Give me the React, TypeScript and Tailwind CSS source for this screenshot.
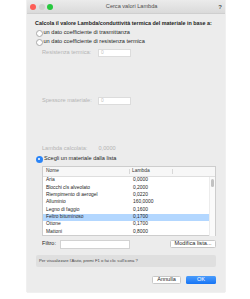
const rows = [
  { name: 'Aria', value: '0,0000' },
  { name: 'Blocchi cls alveolato', value: '0,2000' },
  { name: 'Riempimento di aerogel', value: '0,0220' },
  { name: 'Alluminio', value: '160,0000' },
  { name: 'Legno di faggio', value: '0,1600' },
  { name: 'Feltro bituminoso', value: '0,1700', selected: true },
  { name: 'Ottone', value: '0,1700' },
  { name: 'Mattoni', value: '0,8000' },
]

function Radio({ checked }: { checked?: boolean }) {
  if (checked) {
    return (
      <span className="flex size-[7px] shrink-0 items-center justify-center rounded-full bg-[#2a84f7]">
        <span className="size-[2.5px] rounded-full bg-white" />
      </span>
    )
  }
  return <span className="size-[7px] shrink-0 rounded-full border-[0.5px] border-[#a8a8a8] bg-white" />
}

function Field({ label, value }: { label: string; value: string }) {
  return (
    <div className="flex h-[9px] items-center pl-[7px] text-[#b4b4b4]">
      <span className="w-[56px]">{label}</span>
      <span className="flex h-[8px] w-[33px] items-center border-[0.5px] border-[#dcdcdc] bg-white pl-[2px] text-[4.9px] text-[#c4c4c4]">
        {value}
      </span>
    </div>
  )
}

export default function App() {
  return (
    <div className="h-[299px] w-[250px] bg-white font-['Liberation_Sans',Arial,sans-serif] text-[5.6px] leading-none text-[#262626]">
      <div className="ml-[27px] flex h-[292px] w-[198px] flex-col bg-[#ececec] shadow-[0_0_1px_rgba(0,0,0,0.35)]">
        <div className="flex h-[14px] items-center border-b-[0.5px] border-[#cfcfcf] bg-gradient-to-b from-[#ebebeb] to-[#dadada] px-[3px]">
          <div className="flex items-center gap-[2.5px]">
            <span className="size-[6px] rounded-full bg-[#fd5d56]" />
            <span className="size-[6px] rounded-full bg-[#d0d0d0]" />
            <span className="size-[6px] rounded-full bg-[#27c83f]" />
          </div>
          <div className="flex-1 pr-[8px] text-center text-[5.6px] text-[#4d4d4d]">Cerca valori Lambda</div>
          <span className="text-[6px] font-bold text-[#555]">?</span>
        </div>

        <div className="flex flex-col pl-[8px] pr-[9px]">
          <div className="mt-[5.5px] flex h-[9px] items-center whitespace-nowrap text-[5.4px] font-bold text-[#222]">
            Calcola il valore Lambda/conduttività termica del materiale in base a:
          </div>
          <div className="flex h-[9px] items-center gap-[1px] pl-[0.5px]">
            <Radio />
            <span>un dato coefficiente di trasmittanza</span>
          </div>
          <div className="flex h-[9px] items-center gap-[1px] pl-[0.5px]">
            <Radio />
            <span>un dato coefficiente di resistenza termica</span>
          </div>
          <div className="mt-[2px]">
            <Field label="Resistenza termica:" value="0" />
          </div>
          <div className="mt-[39px]">
            <Field label="Spessore materiale:" value="0" />
          </div>
          <div className="mt-[39px] flex h-[9px] items-center pl-[7px] text-[#b4b4b4]">
            <span className="w-[56px]">Lambda calcolata:</span>
            <span className="pl-[0.5px]">0,0000</span>
          </div>
          <div className="mt-[1px] flex h-[9px] items-center gap-[1.5px] pl-[0.5px]">
            <Radio checked />
            <span>Scegli un materiale dalla lista</span>
          </div>

          <div className="mt-[2.5px] ml-[7px] flex h-[70px] w-[174px] flex-col border-[0.5px] border-[#cdcdcd] bg-white text-[4.9px]">
            <div className="flex h-[10px] shrink-0 items-center border-b-[0.5px] border-[#dedede] bg-[#f7f7f7] text-[#333]">
              <span className="w-[87px] border-r-[0.5px] border-[#d8d8d8] pl-[3px]">Nome</span>
              <span className="w-[43px] border-r-[0.5px] border-[#d8d8d8] pl-[2px]">Lambda</span>
            </div>
            <div className="flex flex-1">
              <div className="flex flex-1 flex-col">
                {rows.map((r) => (
                  <div
                    key={r.name}
                    className={`flex h-[7.35px] items-center ${r.selected ? 'bg-[#b3d7ff]' : ''}`}
                  >
                    <span className="w-[87px] pl-[3px]">{r.name}</span>
                    <span className="pl-[3px]">{r.value}</span>
                  </div>
                ))}
              </div>
              <div className="w-[6px] border-l-[0.5px] border-[#ececec] bg-[#fafafa] pt-[1.5px]">
                <div className="mx-auto h-[8px] w-[2.5px] rounded-full bg-[#c2c2c2]" />
              </div>
            </div>
          </div>

          <div className="mt-[3px] flex h-[10px] items-center pl-[7px]">
            <span className="w-[18px]">Filtro:</span>
            <span className="h-[9px] w-[70px] border-[0.5px] border-[#d2d2d2] bg-white" />
            <span className="ml-auto flex h-[8.5px] w-[46px] items-center justify-center whitespace-nowrap rounded-[1.5px] border-[0.5px] border-[#c8c8c8] bg-white">
              Modifica lista...
            </span>
          </div>

          <div className="mt-[6px] ml-[1px] flex h-[12px] items-center whitespace-nowrap rounded-[2px] bg-[#dfdfdf] pl-[3px] text-[4.2px] text-[#444]">
            Per visualizzare l'Aiuto, premi F1 o fai clic sull'icona ?
          </div>

          <div className="mt-[8.5px] flex justify-end gap-[5px]">
            <span className="flex h-[8.5px] w-[29px] items-center justify-center rounded-[1.5px] border-[0.5px] border-[#c8c8c8] bg-white">
              Annulla
            </span>
            <span className="flex h-[8.5px] w-[30px] items-center justify-center rounded-[1.5px] bg-gradient-to-b from-[#4a9cfb] to-[#1474f5] text-white">
              OK
            </span>
          </div>
        </div>
      </div>
    </div>
  )
}
